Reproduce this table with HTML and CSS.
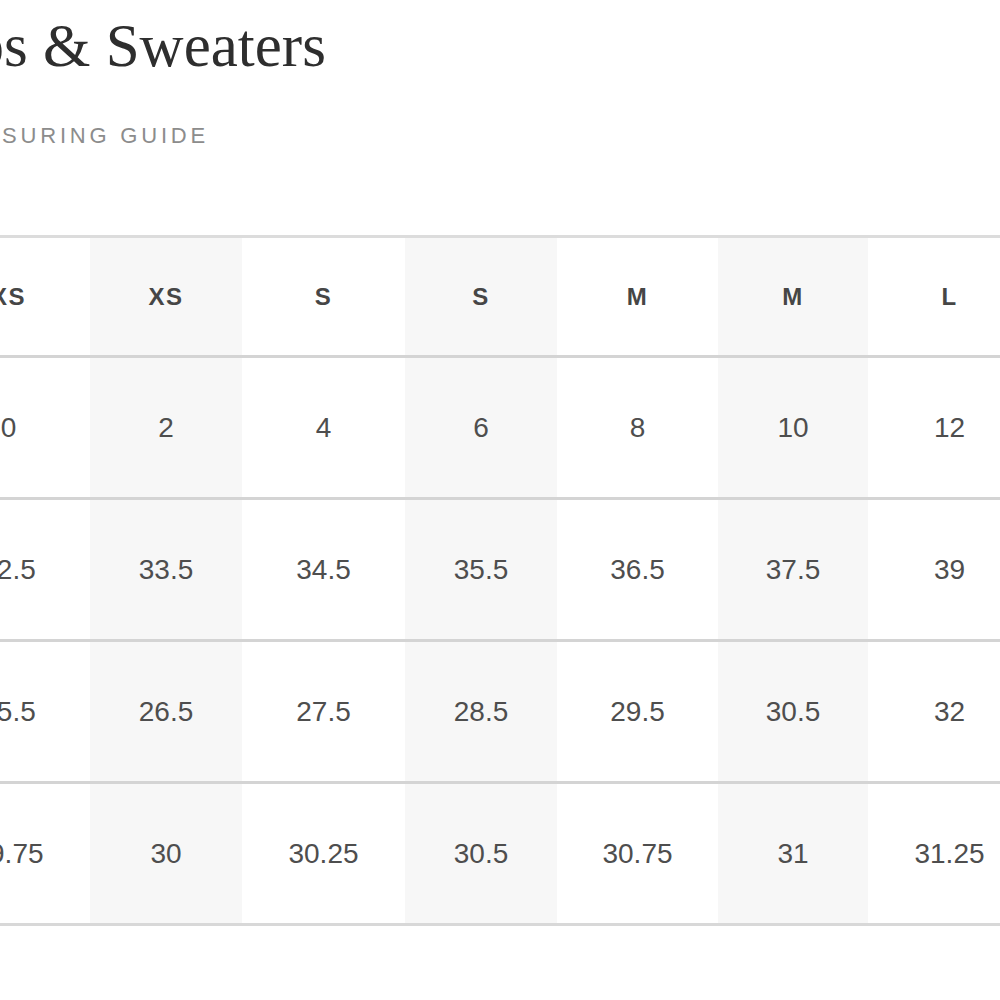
FILE: index.html
```html
<!DOCTYPE html>
<html lang="en">
<head>
<meta charset="utf-8">
<title>Tops &amp; Sweaters size chart</title>
<link rel="stylesheet" href="styles.css">
</head>
<body>
<main class="page">
  <h1 class="title">Tops &amp; Sweaters</h1>
  <a class="guide" href="#">MEASURING GUIDE</a>
  <table class="chart">
    <colgroup>
      <col class="c1">
      <col class="c2 shade">
      <col class="c1">
      <col class="c2 shade">
      <col class="c3">
      <col class="c4 shade">
      <col class="c1">
    </colgroup>
    <thead>
      <tr class="head">
        <th>XS</th><th>XS</th><th>S</th><th>S</th><th>M</th><th>M</th><th>L</th>
      </tr>
    </thead>
    <tbody>
      <tr><td>0</td><td>2</td><td>4</td><td>6</td><td>8</td><td>10</td><td>12</td></tr>
      <tr><td>32.5</td><td>33.5</td><td>34.5</td><td>35.5</td><td>36.5</td><td>37.5</td><td>39</td></tr>
      <tr><td>25.5</td><td>26.5</td><td>27.5</td><td>28.5</td><td>29.5</td><td>30.5</td><td>32</td></tr>
      <tr class="last"><td>29.75</td><td>30</td><td>30.25</td><td>30.5</td><td>30.75</td><td>31</td><td>31.25</td></tr>
    </tbody>
  </table>
</main>
</body>
</html>
```
FILE: styles.css
```css
html, body {
  margin: 0;
  padding: 0;
  background: #ffffff;
  overflow: hidden;
}

.page {
  margin-left: -90px;
  width: 1200px;
  padding-top: 16px;
  font-family: "Liberation Sans", Arial, sans-serif;
}

.title {
  margin: 0;
  font-family: "Liberation Serif", "Times New Roman", serif;
  font-weight: 400;
  font-size: 61px;
  line-height: 60px;
  color: #2e2e2e;
}

.guide {
  display: block;
  margin-top: 49px;
  padding-left: 33px;
  font-size: 22px;
  line-height: 21px;
  letter-spacing: 3.8px;
  color: #8c8c8c;
  text-decoration: none;
}

.chart {
  margin-top: 89px;
  margin-left: 17px;
  border-collapse: collapse;
  table-layout: fixed;
  width: 1104px;
  border-bottom: 3px solid #d8d8d8;
}

.c1 { width: 163px; }
.c2 { width: 152px; }
.c3 { width: 161px; }
.c4 { width: 150px; }
.shade { background: #f7f7f7; }

.chart th,
.chart td {
  padding: 0;
  text-align: center;
  vertical-align: middle;
  border-top: 3px solid #d4d4d4;
}

.chart th {
  height: 117px;
  font-size: 24px;
  font-weight: 700;
  letter-spacing: 1.5px;
  color: #464646;
  border-top-color: #dcdcdc;
}

.chart td {
  height: 139px;
  font-size: 28px;
  font-weight: 400;
  color: #4e4e4e;
}
```
